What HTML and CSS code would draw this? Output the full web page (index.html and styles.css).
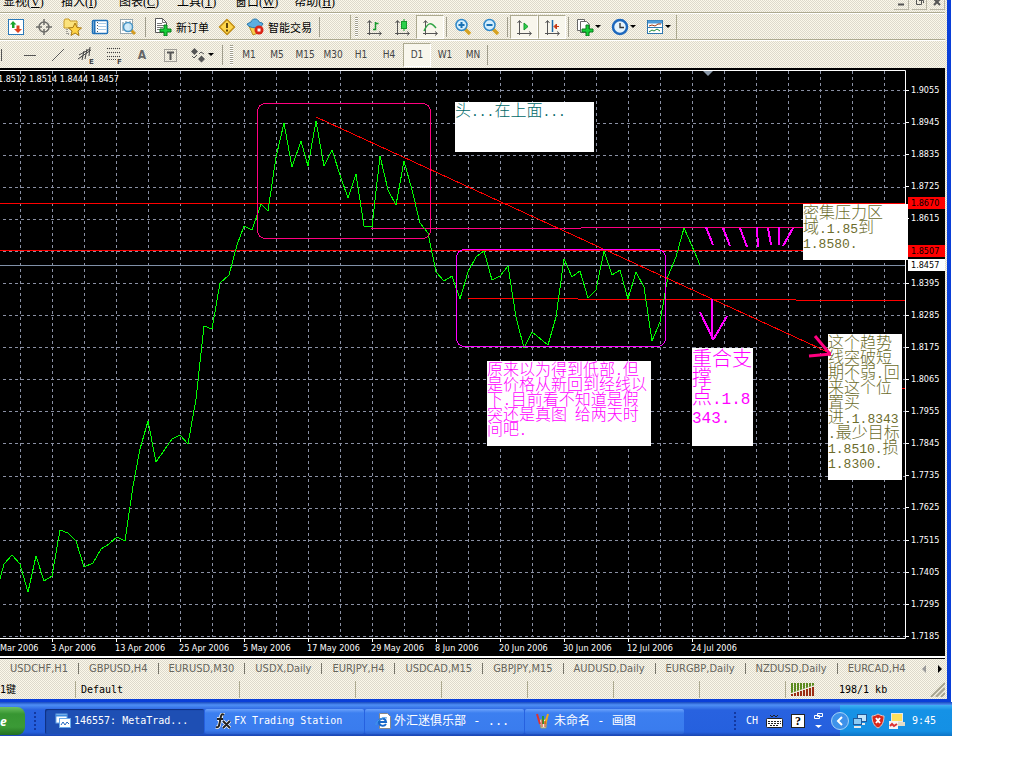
FILE: index.html
```html
<!DOCTYPE html>
<html lang="zh-CN">
<head>
<meta charset="utf-8">
<title>MetaTrader</title>
<link rel="stylesheet" href="styles.css">
</head>
<body>
<div class="desktop">
<main class="window">
  <header class="menubar">
    <nav class="menus">
      <button>显视(<u>V</u>)</button><button>插入(<u>I</u>)</button><button>图表(<u>C</u>)</button><button>工具(<u>T</u>)</button><button>窗口(<u>W</u>)</button><button>帮助(<u>H</u>)</button>
    </nav>
    <div class="winbtns">
      <button aria-label="最小化"><svg width="14" height="10"><path d="M4 4.500h6" stroke="#555" stroke-width="2"/></svg></button>
      <button aria-label="还原"><svg width="14" height="10"><path d="M4.500 0v4.500h5V0M7 .5h4.500V3" fill="none" stroke="#555"/></svg></button>
      <button aria-label="关闭"><svg width="14" height="10"><path d="M4 5l6-6M10 5L4 -1" stroke="#555" stroke-width="2"/></svg></button>
    </div>
  </header>

  <div class="toolbar main">
    <button class="tool" aria-label="市场报价"><svg width="18" height="18"><rect x="1.500" y="1.500" width="15" height="15" fill="#fff" stroke="#2b79b9"/><path d="M6 3L3 6.500h2V10h2.500V6.500h2z" fill="#18a52a"/><path d="M11 15l-4-4h2.500V7.500h3V11H15z" fill="#e0431e"/></svg></button>
    <button class="tool" aria-label="十字线"><svg width="18" height="18" fill="none" stroke="#6c6c68"><circle cx="9" cy="9" r="5" stroke-width="1.500"/><path d="M9 1v6M9 11v6M1 9h6M11 9h6" stroke-width="1.500"/></svg></button>
    <button class="tool" aria-label="导航"><svg width="20" height="18"><path d="M2 10V3l1-2h4l1 2h7v7z" fill="#fbe27c" stroke="#c79a26"/><path d="M5 11v5h3" fill="none" stroke="#555" stroke-dasharray="1 1"/><path d="M13 5l2 4.500 4.500.5-3.500 3 1 4.500-4-2.500-4 2.500 1-4.500-3.500-3 4.500-.5z" fill="#ffd447" stroke="#a87912"/></svg></button>
    <button class="tool" aria-label="终端"><svg width="18" height="18"><rect x="1.500" y="2.500" width="15" height="13" rx="1" fill="#fff" stroke="#1e70b8" stroke-width="1.500"/><path d="M3.500 3v12" stroke="#1e70b8" stroke-width="2"/><path d="M7 5.500h8M7 8.500h8M7 11.500h8" stroke="#aacbe8"/><path d="M6.500 4v10" stroke="#555" stroke-dasharray="1 2"/></svg></button>
    <button class="tool" aria-label="测试"><svg width="18" height="18"><rect x="1.500" y="1.500" width="12" height="14" fill="#fff" stroke="#97a6ad"/><path d="M4 4v9M7 3v3M11 3v8" stroke="#65808c"/><path d="M12 12l4 4" stroke="#d39b20" stroke-width="3"/><circle cx="9" cy="9" r="4.500" fill="#c9e9fa" fill-opacity=".85" stroke="#4995c5" stroke-width="1.500"/></svg></button>
    <i class="sep"></i>
    <button class="tool text"><svg width="18" height="18"><path d="M1.500.5h7l4 4v10h-11z" fill="#fff" stroke="#555"/><path d="M8.500.5v4h4M3 5.500h5M3 7.500h8M3 9.500h6M3 11.500h5" fill="none" stroke="#777"/><path d="M10 7h3v4h4v3h-4v4h-3v-4H6v-3h4z" fill="#16cf38" stroke="#087a1a"/></svg><span>新订单</span></button>
    <button class="tool" aria-label="警告"><svg width="18" height="18"><path d="M9 1.500L16.500 9 9 16.500 1.500 9z" fill="#ffd64b" stroke="#c18d15" stroke-width="1.500" stroke-linejoin="round"/><path d="M9 5v5M9 11.500v2" stroke="#604408" stroke-width="2"/></svg></button>
    <button class="tool text"><svg width="18" height="18"><path d="M3 8h12l-3 7-5 2z" fill="#f7cf4b" stroke="#b98b21"/><path d="M1 6c1-1 3-1 4-2 1-4 7-4 8 0 1 1 3 0 4 2-2 5-14 5-16 0z" fill="#5caee2" stroke="#2a78ab"/><circle cx="13" cy="12" r="4.500" fill="#da2516"/><rect x="11.500" y="10.500" width="3" height="3" fill="#fff"/></svg><span>智能交易</span></button>
    <i class="sep"></i>
    <span class="toolgroup">
    <i class="grip"></i>
    <button class="tool" aria-label="柱状图"><svg width="18" height="18" fill="none" stroke="#555"><path d="M4.500 17V3M2 15.500h14M2.500 5l2-2.500 2 2.500M14 13.500l2.500 2-2.500 2"/><path d="M8 11.500h2.500V4M10.500 5.500h3" stroke="#169a2c" stroke-width="1.500"/></svg></button>
    <button class="tool" aria-label="阴阳烛"><svg width="18" height="18" fill="none" stroke="#555"><path d="M4.500 17V3M2 15.500h14M2.500 5l2-2.500 2 2.500M14 13.500l2.500 2-2.500 2"/><path d="M11 1v12" stroke="#169a2c"/><rect x="8.500" y="3.500" width="5" height="7" fill="#2bd04a" stroke="#169a2c"/></svg></button>
    <button class="tool on" aria-label="折线图"><svg width="18" height="18" fill="none" stroke="#555"><path d="M4.500 17V3M2 15.500h14M2.500 5l2-2.500 2 2.500M14 13.500l2.500 2-2.500 2"/><path d="M3 13C7 4 10 4 15 10" stroke="#30a545" stroke-width="1.500"/></svg></button>
    <i class="sep"></i>
    <button class="tool" aria-label="放大"><svg width="18" height="18"><path d="M11 11l5 5" stroke="#d6a324" stroke-width="3.500"/><circle cx="7.500" cy="7" r="5.500" fill="#d5effd" stroke="#2f88c9" stroke-width="1.500"/><path d="M4.500 7h6M7.500 4v6" stroke="#1871b4" stroke-width="2"/></svg></button>
    <button class="tool" aria-label="缩小"><svg width="18" height="18"><path d="M11 11l5 5" stroke="#d6a324" stroke-width="3.500"/><circle cx="7.500" cy="7" r="5.500" fill="#d5effd" stroke="#2f88c9" stroke-width="1.500"/><path d="M4.500 7h6" stroke="#1871b4" stroke-width="2"/></svg></button>
    <i class="sep"></i>
    <button class="tool on" aria-label="自动滚动"><svg width="18" height="18" fill="none" stroke="#555"><path d="M4.500 17V3M2 15.500h14M2.500 5l2-2.500 2 2.500M14 13.500l2.500 2-2.500 2"/><path d="M9 5l4 3.500L9 12z" fill="#2bd04a" stroke="#169a2c"/></svg></button>
    <button class="tool on" aria-label="图表平移"><svg width="18" height="18" fill="none" stroke="#555"><path d="M4.500 17V3M2 15.500h14M2.500 5l2-2.500 2 2.500M14 13.500l2.500 2-2.500 2"/><path d="M9.500 2v12" stroke="#1d6ba8" stroke-width="1.500"/><path d="M16 8.500h-3M13.500 6L11 8.500l2.500 2.500z" stroke="#c73812" fill="#c73812"/></svg></button>
    <i class="sep"></i>
    <button class="tool drop" aria-label="指标"><svg width="18" height="18"><path d="M1.500 1.500h7v11h-7z" fill="#fff" stroke="#666"/><path d="M4.500 3.500h6l3 3v8h-9z" fill="#fff" stroke="#666"/><path d="M10 7h3v4h4v3h-4v4h-3v-4H6v-3h4z" fill="#16cf38" stroke="#087a1a"/></svg><b class="caret"></b></button>
    <button class="tool drop" aria-label="时段"><svg width="18" height="18"><circle cx="9" cy="9" r="7" fill="#e6f4fc" stroke="#1d68bd" stroke-width="2.500"/><path d="M9 5v4.500h4" fill="none" stroke="#333" stroke-width="1.300"/></svg><b class="caret"></b></button>
    <button class="tool drop" aria-label="模板"><svg width="18" height="18"><rect x="1.500" y="2.500" width="15" height="13" fill="#fff" stroke="#3077ae"/><path d="M2 4h14" stroke="#4d9bd8" stroke-width="3"/><path d="M2 9.500h14" stroke="#3077ae"/><path d="M3 8l3-1 3 1 3-2h3" fill="none" stroke="#a33a14"/><path d="M3 14l3-2 2 1 3-2 3 2" fill="none" stroke="#1f8b35"/></svg><b class="caret"></b></button>
    </span>
  </div>

  <div class="toolbar lines">
    <button class="tool" aria-label="垂直线"><svg width="18" height="18"><path d="M8.500 3v12" stroke="#555"/></svg></button>
    <button class="tool" aria-label="水平线"><svg width="18" height="18"><path d="M3 9.500h12" stroke="#555"/></svg></button>
    <button class="tool" aria-label="趋势线"><svg width="18" height="18"><path d="M3 15L15 3" stroke="#555"/></svg></button>
    <button class="tool" aria-label="等距通道"><svg width="18" height="18"><path d="M1 13L14 4M2 9l11-6M5 14l2-9M8 13l2-10M12 10l1-9" stroke="#444" fill="none"/><text x="12" y="18" class="sub">E</text></svg></button>
    <button class="tool" aria-label="斐波纳契"><svg width="18" height="18"><path d="M2 2.500h14M2 6.500h14M2 10.500h14M2 13.500h9" stroke="#444" stroke-dasharray="1 1"/><text x="12" y="18" class="sub">F</text></svg></button>
    <button class="tool glyph">A</button>
    <button class="tool" aria-label="文字标签"><svg width="18" height="18"><rect x="3.500" y="3.500" width="12" height="12" fill="none" stroke="#555" stroke-dasharray="1 1"/><path d="M6 6.500h7M9.500 6v8" stroke="#555" stroke-width="2"/></svg></button>
    <button class="tool drop" aria-label="箭头"><svg width="18" height="18"><path d="M5.500 2L9 5.500 5.500 9 2 5.500zM12.500 9.500L16 13l-3.500 3.500L9 13z" fill="#555"/><path d="M3 10l2 2 3-3M10 8l2-2 3 2" fill="none" stroke="#555"/></svg><b class="caret"></b></button>
    <i class="sep"></i>
    <i class="grip"></i>
    <button class="tool">M1</button><button class="tool">M5</button><button class="tool">M15</button><button class="tool">M30</button><button class="tool">H1</button><button class="tool">H4</button><button class="tool on">D1</button><button class="tool">W1</button><button class="tool">MN</button>
    <i class="sep end"></i>
  </div>

  <section class="chart">
    <div class="plot">
      <svg class="canvas" width="906" height="571" viewBox="0 68 906 571">
        <g class="grid" id="grid"></g>
        <path d="M0 70.500H905.500V638.500H0" fill="none" stroke="#fff"/>
        <path d="M703 71h10l-5 5z" fill="#8a98a8"/>
        <g fill="none" shape-rendering="crispEdges">
          <path d="M0 203.500H905" stroke="#f00"/>
          <path d="M0 250.500H905" stroke="#f00"/>
          <path d="M0 265.500H905" stroke="#8090a8"/>
          <path d="M371 228.500H581M581 227.500H803" stroke="#ff0080"/>
          <path d="M468 298.500H578M578 299.500H796M796 300.500H905M902 388.500h3" stroke="#f00"/>
          <polyline stroke="#0f0" points="0,579 4,564 12,555 20,564 28,592 36,556 44,581 52,576 60,530 68,533 76,541 84,567 93,563 101,549 109,544 117,537 125,541 133,486 140,449 148,421 156,462 172,439 180,435 188,444 196,399 204,326 212,329 220,283 229,275 237,245 244,226 252,230 261,204 268,211 276,157 284,123 292,167 301,141 308,166 316,121 324,166 332,150 341,178 348,198 356,174 364,226 372,227 380,156 388,190 396,205 404,161 412,190 420,223 428,233 436,272 444,281 452,276 460,299 468,272 476,257 484,251 492,280 500,276 508,266 516,317 524,348 532,332 548,345 556,317 564,259 572,277 580,271 588,298 596,290 604,251 612,275 620,270 628,299 636,272 644,287 652,341 660,322 668,276 676,257 684,228 692,246 700,265"/>
          <path d="M316 117L832 354" stroke="#f00"/>
          <rect x="257.500" y="103.500" width="173" height="135" rx="8" stroke="#ff0080"/>
          <rect x="456.500" y="249.500" width="209" height="97" rx="8" stroke="#f0f"/>
          <path d="M706 227l7 18M723 228l7 18M740 228l7 19M757 227l1 20M768 228l3 17M779 227v18M793 228l-10 18M712 299v40M700 312l13 27M727 316l-14 24" stroke="#f0f" stroke-width="2"/>
        </g>
      </svg>
      <p class="ohlc">1.8512 1.8514 1.8444 1.8457</p>
      <p class="note head">头<span>...</span>在上面<span>...</span></p>
      <p class="note dense">密集压力区<br>域<span>.1.85</span>到<br><span>1.8580.</span></p>
      <p class="note low">原来以为得到低部<span>.</span>但<br>是价格从新回到经线以<br>下<span>.</span>目前看不知道是假<br>突还是真图<span> </span>给两天时<br>间吧<span>.</span></p>
      <p class="note support">重合支<br>撑<br>点<span>.1.8</span><br><span>343.</span></p>
      <p class="note trend">这个趋势<br>线突破短<br>期不弱<span>.</span>回<br>来这个位<br>置买<br>进<span>.1.8343</span><br><span>.</span>最少目标<br><span>1.8510.</span>损<br><span>1.8300.</span></p>
      <svg class="arrowhead" width="26" height="24"><path d="M7 1l15 18M1 21l22-2" fill="none" stroke="#ff0080" stroke-width="3"/></svg>
    </div>
    <ol class="prices">
      <li>1.9055</li><li>1.8945</li><li>1.8835</li><li>1.8725</li><li>1.8615</li><li class="tag level">1.8507</li><li>1.8395</li><li>1.8285</li><li>1.8175</li><li>1.8065</li><li>1.7955</li><li>1.7845</li><li>1.7735</li><li>1.7625</li><li>1.7515</li><li>1.7405</li><li>1.7295</li><li>1.7185</li>
      <li class="tag upper">1.8670</li>
      <li class="tag last">1.8457</li>
    </ol>
    <ol class="dates">
      <li>Mar 2006</li><li>3 Apr 2006</li><li>13 Apr 2006</li><li>25 Apr 2006</li><li>5 May 2006</li><li>17 May 2006</li><li>29 May 2006</li><li>8 Jun 2006</li><li>20 Jun 2006</li><li>30 Jun 2006</li><li>12 Jul 2006</li><li>24 Jul 2006</li>
    </ol>
  </section>

  <nav class="tabs">
    <button>USDCHF,H1</button><button>GBPUSD,H4</button><button>EURUSD,M30</button><button>USDX,Daily</button><button>EURJPY,H4</button><button>USDCAD,M15</button><button>GBPJPY,M15</button><button>AUDUSD,Daily</button><button>EURGBP,Daily</button><button>NZDUSD,Daily</button><button>EURCAD,H4</button>
    <button class="scroll off" aria-label="向左"></button><button class="scroll" aria-label="向右"></button>
  </nav>

  <footer class="status">
    <span class="hint">1键</span><span class="profile">Default</span><span class="cell wide"></span><span class="cell"></span><span class="cell"></span><span class="cell"></span><span class="cell"></span><span class="cell"></span>
    <span class="conn"><svg width="24" height="13"><path d="M0 5.500h24" stroke="#5a8a1e" stroke-width="11" stroke-dasharray="2 1"/><path d="M0 13V10L24 2V13z" fill="#ece9d8"/><path d="M1 13v-2M4 13v-3M7 13v-4M10 13V8M13 13V7M16 13V6M19 13V5M22 13V4" stroke="#9c2c14" stroke-width="2"/></svg>198/1 kb</span>
    <svg class="sizer" width="16" height="16"><path d="M2 16L16 2M7 16l9-9M12 16l4-4" stroke="#a8a592" stroke-width="2"/></svg>
  </footer>
</main>

<div class="taskbar">
  <button class="start" aria-label="开始">e</button>
  <i class="dots"></i>
  <button class="task active"><svg width="16" height="16"><rect x="1" y="1" width="11" height="9" fill="#fff" stroke="#6aa9e8"/><path d="M1 2.500h11" stroke="#3b8be0" stroke-width="2"/><rect x="4.500" y="5.500" width="11" height="9" fill="#fff" stroke="#6aa9e8"/><path d="M6 12l2-3 2 3 2-3 2 2" fill="none" stroke="#2468c0"/></svg>146557: MetaTrad...</button>
  <button class="task"><svg width="16" height="16"><path d="M9 2C6 0 6 3 5 8s-1 7-4 6M2 6h6M8 8l7 7M15 8l-7 7" fill="none" stroke="#fff" stroke-width="3.500"/><path d="M9 2C6 0 6 3 5 8s-1 7-4 6M2 6h6M8 8l7 7M15 8l-7 7" fill="none" stroke="#222" stroke-width="2"/></svg>FX Trading Station</button>
  <button class="task cjk"><svg width="16" height="16"><path d="M4.500.5h8l3 3v12h-11z" fill="#fff" stroke="#888"/><path d="M11 11c-2 3-7 2-7-2s6-5 7 0H4" fill="none" stroke="#1767c9" stroke-width="2"/><path d="M1 12C0 9 8 3 12 5" fill="none" stroke="#3f9be8"/></svg>外汇迷俱乐部 - ...</button>
  <button class="task cjk"><svg width="16" height="16"><path d="M4 7l8-1-1 9H6z" fill="#f4f0dc" stroke="#996"/><path d="M5 11L2 1" stroke="#d33" stroke-width="2"/><path d="M8 11V3" stroke="#2a9c34" stroke-width="2"/><path d="M10 11l3-10" stroke="#f0a818" stroke-width="2"/><path d="M7 14V7M10 14V8" stroke="#c33014"/></svg>未命名 - 画图</button>
  <div class="lang">
    <i class="dots"></i>
    <span>CH</span>
    <svg width="17" height="14"><rect x=".5" y="4.500" width="16" height="9" rx="1" fill="#fff" stroke="#222"/><path d="M2 7.500h13M2 9.500h13M4 11.500h9" stroke="#222" stroke-dasharray="2 1"/><path d="M4 1l2 2 2-2 2 2 2-2" fill="none" stroke="#222"/></svg>
    <b class="help">?</b>
    <svg width="12" height="18"><path d="M4.500 1.500h5v3h-5zM1.500 3.500h5v3h-5z" fill="#2a63d8" stroke="#fff"/><path d="M2 13h7l-3.500 3z" fill="#fff"/></svg>
  </div>
  <div class="tray">
    <button class="chev" aria-label="显示图标"><svg width="18" height="18"><circle cx="9" cy="9" r="8.500" fill="#3e92ea" stroke="#a4d2f7"/><path d="M11 5L7 9l4 4" fill="none" stroke="#fff" stroke-width="2"/></svg></button>
    <svg width="16" height="16"><rect x="5.500" y="1.500" width="9" height="7" fill="#bfe3fa" stroke="#215a9c"/><path d="M7 11h6" stroke="#e8e8e8" stroke-width="2"/><rect x="1.500" y="5.500" width="8" height="6" fill="#8bcbf5" stroke="#215a9c"/><path d="M2 14h7" stroke="#e8e8e8" stroke-width="2"/></svg>
    <svg width="14" height="16"><path d="M7 1c2 1 4 2 6 2 0 6-2 10-6 12C3 13 1 9 1 3c2 0 4-1 6-2z" fill="#d9271a" stroke="#e9c6c0"/><path d="M5 5l4 5M9 5l-4 5" stroke="#fff" stroke-width="2"/></svg>
    <svg width="17" height="16"><rect x="3.500" y=".5" width="11" height="8" fill="#ffe05a" stroke="#e8e8e8"/><path d="M8 11h9" stroke="#e0dcc8" stroke-width="4"/><rect x="1" y="8" width="9" height="8" fill="#f4f4f4"/><path d="M2 13l2-2 2 2 3-2" fill="none" stroke="#d33" stroke-width="2"/></svg>
    <time>9:45</time>
  </div>
</div>
</div>
<script src="grid.js"></script>
</body>
</html>
```
FILE: grid.js
```js
const grid = document.getElementById("grid");
const rows = [90, 123, 155, 187, 219, 251, 283, 315, 347, 379, 411, 443, 476, 508, 540, 572, 604, 636];
let d = rows.map(y => `M3 ${y + 0.5}H905`).join("");
for (let x = 20; x < 905; x += 32) d += `M${x + 0.5} 71V637`;
const path = document.createElementNS("http://www.w3.org/2000/svg", "path");
path.setAttribute("d", d);
grid.appendChild(path);
```
FILE: styles.css
```css
* { box-sizing: border-box; }
body { margin: 0; background: #fff; font-family: "DejaVu Sans Condensed", "Noto Sans CJK SC", sans-serif; font-size: 10px; color: #000; }
button { border: 0; padding: 0; margin: 0; background: none; font: inherit; color: inherit; white-space: nowrap; }
p, ol { margin: 0; padding: 0; list-style: none; }
svg { display: block; flex: none; }
.desktop { margin-right: 72px; overflow: hidden; }
.window {
  display: flex; flex-direction: column;
  margin-right: 1px; padding-right: 2px;
  border-right: 4px solid #0a3fd8; border-bottom: 3px solid #0a3fd8;
  background: repeating-conic-gradient(#fbf8ea 0 25%, #ddd9cc 0 50%) 0 0 / 2px 2px;
}

.menubar { display: flex; justify-content: space-between; height: 13px; overflow: hidden; border-bottom: 1px solid #aca98f; }
.menus { display: flex; align-items: flex-end; gap: 16px; padding: 0 0 3px 3px; font: 12px/14px "Liberation Serif", "Noto Sans CJK SC", serif; }
.menus button { min-width: 42px; text-align: left; line-height: 14px; }
.winbtns { display: flex; gap: 3px; }
.winbtns button { width: 15px; height: 10px; border: solid #b8b5a5; border-width: 0 1px 1px 0; }

.toolbar { display: flex; align-items: center; height: 27px; border-top: 1px solid #fff; border-bottom: 1px solid #aca98f; }
.toolbar.main { padding-left: 2px; }
.toolbar.lines { height: 28px; margin-left: -12px; color: #444; border-bottom: 0; }
.tool { display: flex; align-items: center; justify-content: center; flex: none; width: 28px; height: 24px; }
.tool.text { width: auto; padding: 0 4px 0 5px; gap: 4px; font: 11px/14px "Noto Sans CJK SC", sans-serif; }
.tool.drop { width: 35px; gap: 1px; }
.tool.on { border: 1px solid; border-color: #aca98f #fff #fff #aca98f; background: #f8f6ec; }
.tool.glyph { font: bold 12px/14px "DejaVu Sans Condensed", sans-serif; color: #666; }
.sub { font: bold 7px "DejaVu Sans", sans-serif; fill: #444; }
.sep { flex: none; width: 1px; height: 20px; margin: 0 3px; background: #a09d8c; }
.sep.end { margin: 0; }
.toolgroup { display: flex; align-items: center; margin-left: 27px; border-left: 1px solid #aca98f; border-right: 1px solid #aca98f; }
.toolgroup .sep { margin: 0 2px; }
.grip { flex: none; width: 3px; height: 20px; margin: 0 2px 0 4px; background: repeating-linear-gradient(#a09d8c 0 1px, #fff 1px 2px); }
.caret { border: 3px solid transparent; border-top-color: #000; border-bottom: 0; }

.chart { display: grid; grid-template-columns: minmax(0, 1fr) 39px; background: #000; color: #fff; font-size: 9px; line-height: 12px; }
.plot { position: relative; z-index: 1; }
.grid { stroke: #8a90a4; stroke-dasharray: 3 3; fill: none; shape-rendering: crispEdges; }
.ohlc { position: absolute; left: 0; top: 5px; margin-left: -2px; }
.note { position: absolute; background: #fff; font: 16px/15px "Noto Sans CJK SC", sans-serif; font-weight: 300; white-space: nowrap; }
.note span { font: 13px/1px "Liberation Mono", monospace; white-space: pre; }
.head { left: 455px; top: 34px; width: 139px; height: 50px; color: #006868; }
.dense { left: 803px; top: 136px; width: 105px; height: 56px; color: #6c6c2c; }
.low { left: 487px; top: 293px; width: 164px; height: 85px; color: #f0f; }
.support { left: 692px; top: 280px; width: 61px; height: 98px; color: #f0f; font-size: 20px; line-height: 19px; }
.support span { font-size: 16px; line-height: 1px; }
.trend { left: 828px; top: 266px; width: 74px; height: 146px; color: #6c6c2c; }
.arrowhead { position: absolute; left: 808px; top: 267px; }
.prices { grid-column: 2; grid-row: 1 / 3; position: relative; display: flex; flex-direction: column; justify-content: space-between; padding: 16px 0 14px; }
.prices li { padding-left: 5px; background: linear-gradient(#fff, #fff) 0 6px / 3px 1px no-repeat; }
.prices .tag { margin-left: 2px; padding-left: 3px; background: #f00; color: #000; }
.prices .upper { position: absolute; left: 0; right: 0; top: 129px; }
.prices .last { position: absolute; left: 0; right: 0; top: 191px; background: #fff; }
.dates { display: flex; grid-column: 1; height: 17px; }
.dates li { flex: none; width: 64px; padding-top: 3px; white-space: nowrap; background: linear-gradient(#fff, #fff) 1px 0 / 1px 3px no-repeat; }
.dates li:first-child { width: 51px; background: none; }

.tabs { display: flex; align-items: center; height: 23px; border-top: 2px solid #fff; box-shadow: inset 0 1px #000; color: #66655c; font-size: 11px; }
.tabs button { padding: 0 10px; border-right: 1px solid #77756a; line-height: 11px; }
.tabs button:nth-child(11) { border: 0; }
.tabs .scroll { padding: 0; margin: 0 6px; width: 4px; border: 4px solid transparent; border-left-color: #000; border-right: 0; height: 8px; }
.tabs .scroll.off { border: 4px solid transparent; border-right-color: #999; border-left: 0; }

.status { display: flex; align-items: center; height: 20px; font: 10px/17px "DejaVu Sans Mono", "Noto Sans CJK SC", monospace; }
.status span { flex: none; height: 17px; border-right: 1px solid #aca98f; }
.hint { width: 76px; }
.profile { width: 164px; padding-left: 5px; }
.cell { width: 86px; }
.cell.wide { width: 116px; }
.status .conn { display: flex; flex: 1; align-items: center; gap: 24px; border: 0; padding-left: 5px; }
.sizer { margin-left: -16px; }

.taskbar { display: flex; align-items: center; height: 34px; padding-top: 4px; color: #fff; font: 10px/14px "DejaVu Sans Mono", "Noto Sans CJK SC", monospace; background: linear-gradient(#1a4bc0, #4e8ff5 3px, #2862e0 8px, #2560de 30px, #1a45b0); }
.start { flex: none; width: 25px; height: 28px; overflow: hidden; border-radius: 0 8px 8px 0; text-align: left; font: italic bold 12px "Open Sans", sans-serif; background: linear-gradient(#6cc060, #379632 7px, #3b9a36 20px, #237020); }
.dots { flex: none; width: 4px; height: 20px; margin: 0 8px; background: radial-gradient(#1338a0 1px, transparent 1px) 0 0 / 4px 4px; }
.task { display: flex; align-items: center; gap: 3px; flex: 0 1 159px; height: 25px; margin-right: 1px; padding-left: 10px; border-radius: 2px; background: linear-gradient(#6ba2fb, #3c7ff0 4px, #3a7cee 21px, #2b62d0); }
.task.active { background: #1e4fb4; box-shadow: inset 1px 1px 1px #0e2f80; }
.task.cjk { font-size: 12px; }
.lang { display: flex; align-items: center; gap: 8px; margin-left: auto; padding-right: 15px; }
.lang .dots { margin: 0 1px 0 0; }
.help { width: 14px; height: 14px; border: 1px solid #222; background: #fff; color: #000; text-align: center; font: bold 12px/13px "Liberation Serif", serif; }
.tray { display: flex; align-items: center; gap: 3px; flex: none; width: 112px; height: 32px; background: linear-gradient(#3fb0f4, #1592e6 5px, #1490e4 26px, #0d6fc0); }
.chev { margin-left: -9px; }
.tray time { margin-left: 4px; }
```
